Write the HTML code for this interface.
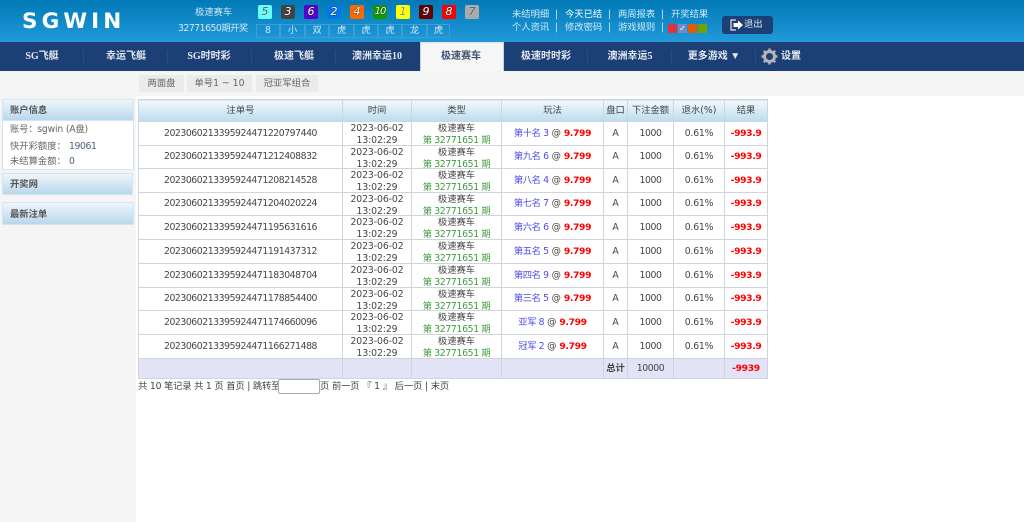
<!DOCTYPE html>
<html lang="zh"><head><meta charset="utf-8"><title>SGWIN</title>
<style>
*{box-sizing:border-box}
html,body{margin:0;padding:0;width:1024px;height:522px;overflow:hidden;background:#fff}
body{font-family:"DejaVu Sans","Noto Sans CJK SC",sans-serif;font-size:9.3px;color:#444}
#w{position:relative;width:1024px;height:522px;overflow:hidden;filter:blur(.3px)}
.a{position:absolute;white-space:nowrap}
.hd{left:0;top:0;width:1024px;height:42px;background:linear-gradient(#0079b6,#229ada)}
.nav{left:0;top:42px;width:1024px;height:29px;background:#1c3f75}
.n{top:42px;height:29px;width:84px;text-align:center;color:#e4e9f0;font:bold 10px/29px "Liberation Serif","Noto Sans CJK SC",sans-serif}
.sep{top:50px;width:1px;height:13px;background:#2a4d80}
.t{color:#d3e9f7;font-size:9.3px;line-height:12px}
.b{top:5px;width:14px;height:14px;border-radius:2px;text-align:center;font:italic 11px/14px "DejaVu Sans",sans-serif;color:#fff;text-shadow:0 0 1px #222,0 0 1px #222}
.c{top:24px;height:14px;border:1px solid #3a9fd6;text-align:center;color:#cfe6f5;line-height:12px;font-size:9.3px}
.sub{top:75px;height:17px;background:#ebebeb;color:#666;text-align:center;line-height:17px;font-size:9.3px}
.side{left:0;top:71px;width:136px;height:451px;background:#f5f5f5}
.sh{background:linear-gradient(#f0f6fb,#b9d7ec);border:1px solid #d4e5f2;color:#555;font-weight:bold;font-size:9.3px;padding-left:7px}
table{position:absolute;left:138px;top:99px;width:629px;border-collapse:collapse;table-layout:fixed;border:1px solid #c9d0dc}
td,th{border:1px solid #cfd4de;text-align:center;padding:0;font-size:9.3px;line-height:12px;font-weight:normal;white-space:nowrap}
th{background:linear-gradient(#f2f8fc,#bcdcf0);color:#444}
tr.h{height:22px}
tr.x24{height:24px}
tr.x23{height:23px}
tr.s{height:20px}
tr.s td{background:#e2e3f6}
.x{height:21px}
.o{letter-spacing:-.45px}
.m{letter-spacing:-.4px}
.d{letter-spacing:-.1px}
.g{color:#3f9a3f;letter-spacing:-.35px}
.u{color:#4b4bf0;letter-spacing:-.4px}
.w{color:#f00;font-weight:bold;font-size:9.2px;letter-spacing:-.35px}
.p{letter-spacing:-.2px}
</style></head><body><div id="w">
<div class="a hd"></div>
<div class="a" style="left:22px;top:9px;color:#fff;font:bold 21.5px/26px 'DejaVu Sans',sans-serif;letter-spacing:4.1px">SGWIN</div>
<div class="a t" style="left:195px;top:7px">极速赛车</div>
<div class="a t" style="left:178px;top:23px;letter-spacing:-.5px">32771650期开奖</div>
<div class="a b" style="left:258px;background:#6ff;color:#555;text-shadow:0 0 1px #fff">5</div>
<div class="a b" style="left:281px;background:#444">3</div>
<div class="a b" style="left:304px;background:#50c">6</div>
<div class="a b" style="left:327px;background:#07e">2</div>
<div class="a b" style="left:350px;background:#f60">4</div>
<div class="a b" style="left:373px;background:#190;font-size:10px;letter-spacing:-1px">10</div>
<div class="a b" style="left:396px;background:#ff0;color:#888;text-shadow:0 0 1px #fff">1</div>
<div class="a b" style="left:419px;background:#600">9</div>
<div class="a b" style="left:442px;background:#f00">8</div>
<div class="a b" style="left:465px;background:#aaa;color:#555;text-shadow:0 0 1px #fff">7</div>
<div class="a c" style="left:256px;width:24px">8</div>
<div class="a c" style="left:280px;width:25px">小</div>
<div class="a c" style="left:305px;width:24px">双</div>
<div class="a c" style="left:329px;width:25px">虎</div>
<div class="a c" style="left:354px;width:24px">虎</div>
<div class="a c" style="left:378px;width:24px">虎</div>
<div class="a c" style="left:402px;width:25px">龙</div>
<div class="a c" style="left:427px;width:23px">虎</div>
<div class="a t" style="left:512px;top:9px">未结明细</div><div class="a t" style="left:555px;top:9px">|</div>
<div class="a t" style="left:565px;top:9px;color:#fff">今天已结</div><div class="a t" style="left:608px;top:9px">|</div>
<div class="a t" style="left:618px;top:9px">两周报表</div><div class="a t" style="left:661px;top:9px">|</div>
<div class="a t" style="left:671px;top:9px">开奖结果</div>
<div class="a t" style="left:512px;top:22px">个人资讯</div><div class="a t" style="left:555px;top:22px">|</div>
<div class="a t" style="left:565px;top:22px">修改密码</div><div class="a t" style="left:608px;top:22px">|</div>
<div class="a t" style="left:618px;top:22px">游戏规则</div><div class="a t" style="left:661px;top:22px">|</div>
<div class="a" style="left:668px;top:24px;width:9px;height:9px;background:#e4313f"></div>
<div class="a" style="left:678px;top:24px;width:9px;height:9px;background:#6f8cc4;color:#fff;font-size:8px;line-height:9px;text-align:center">✓</div>
<div class="a" style="left:688px;top:24px;width:9px;height:9px;background:#e25c00"></div>
<div class="a" style="left:698px;top:24px;width:9px;height:9px;background:#6ea500"></div>
<div class="a" style="left:722px;top:16px;width:51px;height:18px;background:#1c3f75;border-radius:3px"></div>
<svg class="a" style="left:730px;top:19px" width="14" height="12" viewBox="0 0 14 12"><path d="M6 1H1v10h5" fill="none" stroke="#dfe7f2" stroke-width="1.2"/><path d="M3.500 4H8V1.500L13 6 8 10.500V8H3.500z" fill="#fff"/></svg>
<div class="a" style="left:744px;top:19px;color:#dfe7f2;font-size:9.3px;line-height:12px">退出</div>

<div class="a nav"></div>
<div class="a n" style="left:0">SG飞艇</div>
<div class="a sep" style="left:83px"></div>
<div class="a n" style="left:84px">幸运飞艇</div>
<div class="a sep" style="left:167px"></div>
<div class="a n" style="left:167px">SG时时彩</div>
<div class="a sep" style="left:251px"></div>
<div class="a n" style="left:252px">极速飞艇</div>
<div class="a sep" style="left:335px"></div>
<div class="a n" style="left:335px">澳洲幸运10</div>
<div class="a" style="left:420px;top:42px;width:84px;height:30px;background:#f6f6f6;border-top:1px solid #d7e6f2;border-left:1px solid #c7d5e4;border-right:1px solid #c7d5e4"></div>
<div class="a n" style="left:419px;color:#3c4f70">极速赛车</div>
<div class="a n" style="left:504px">极速时时彩</div>
<div class="a sep" style="left:587px"></div>
<div class="a n" style="left:588px">澳洲幸运5</div>
<div class="a sep" style="left:671px"></div>
<div class="a n" style="left:672px">更多游戏 ▼</div>
<div class="a sep" style="left:755px"></div>
<svg class="a" style="left:761px;top:48px" width="17" height="17" viewBox="0 0 17 17"><circle cx="8.500" cy="8.500" r="5" fill="none" stroke="#b5b5b5" stroke-width="3"/><path d="M8.500 0.500v3M8.500 13.500v3M0.500 8.500h3M13.500 8.500h3M2.800 2.800l2.200 2.200M12 12l2.200 2.200M14.200 2.800L12 5M5 12l-2.200 2.200" stroke="#b5b5b5" stroke-width="2.400"/></svg>
<div class="a n" style="left:781px;width:17px;text-align:left">设置</div>

<div class="a side"></div>
<div class="a" style="left:0;top:71px;width:1024px;height:25px;background:#f5f5f5"></div>
<div class="a sub" style="left:139px;width:45px">两面盘</div>
<div class="a sub" style="left:187px;width:65px">单号1 ~ 10</div>
<div class="a sub" style="left:256px;width:62px">冠亚军组合</div>

<div class="a" style="left:2px;top:99px;width:132px;height:71px;background:#fff;border:1px solid #d4e5f2"></div>
<div class="a sh" style="left:2px;top:99px;width:132px;height:22px;line-height:22px">账户信息</div>
<div class="a" style="left:10px;top:124px;line-height:12px;color:#666;letter-spacing:-.2px">账号：sgwin (A盘)</div>
<div class="a" style="left:10px;top:141px;line-height:12px;color:#666">快开彩额度：<span style="position:absolute;left:59px;color:#4a6080;letter-spacing:-.4px">19061</span></div>
<div class="a" style="left:10px;top:156px;line-height:12px;color:#666">未结算金额：<span style="position:absolute;left:59px;color:#4a6080">0</span></div>
<div class="a sh" style="left:2px;top:173px;width:131px;height:22px;line-height:22px">开奖网</div>
<div class="a sh" style="left:2px;top:202px;width:132px;height:23px;line-height:23px">最新注单</div>

<table>
<colgroup><col style="width:204px"><col style="width:69px"><col style="width:90px"><col style="width:102px"><col style="width:24px"><col style="width:46px"><col style="width:51px"><col style="width:43px"></colgroup>
<tr class="h"><th>注单号</th><th>时间</th><th>类型</th><th>玩法</th><th>盘口</th><th>下注金额</th><th>退水(%)</th><th>结果</th></tr>
<tr class="x24"><td class="o">2023060213395924471220797440</td><td class="d"><div class="x">2023-06-02<br>13:02:29</div></td><td><div class="x">极速赛车<br><span class="g">第 32771651 期</span></div></td><td><span class="u">第十名 3</span> @ <span class="w">9.799</span></td><td>A</td><td class="m">1000</td><td class="p">0.61%</td><td class="w">-993.9</td></tr>
<tr class="x23"><td class="o">2023060213395924471212408832</td><td class="d"><div class="x">2023-06-02<br>13:02:29</div></td><td><div class="x">极速赛车<br><span class="g">第 32771651 期</span></div></td><td><span class="u">第九名 6</span> @ <span class="w">9.799</span></td><td>A</td><td class="m">1000</td><td class="p">0.61%</td><td class="w">-993.9</td></tr>
<tr class="x24"><td class="o">2023060213395924471208214528</td><td class="d"><div class="x">2023-06-02<br>13:02:29</div></td><td><div class="x">极速赛车<br><span class="g">第 32771651 期</span></div></td><td><span class="u">第八名 4</span> @ <span class="w">9.799</span></td><td>A</td><td class="m">1000</td><td class="p">0.61%</td><td class="w">-993.9</td></tr>
<tr class="x23"><td class="o">2023060213395924471204020224</td><td class="d"><div class="x">2023-06-02<br>13:02:29</div></td><td><div class="x">极速赛车<br><span class="g">第 32771651 期</span></div></td><td><span class="u">第七名 7</span> @ <span class="w">9.799</span></td><td>A</td><td class="m">1000</td><td class="p">0.61%</td><td class="w">-993.9</td></tr>
<tr class="x24"><td class="o">2023060213395924471195631616</td><td class="d"><div class="x">2023-06-02<br>13:02:29</div></td><td><div class="x">极速赛车<br><span class="g">第 32771651 期</span></div></td><td><span class="u">第六名 6</span> @ <span class="w">9.799</span></td><td>A</td><td class="m">1000</td><td class="p">0.61%</td><td class="w">-993.9</td></tr>
<tr class="x24"><td class="o">2023060213395924471191437312</td><td class="d"><div class="x">2023-06-02<br>13:02:29</div></td><td><div class="x">极速赛车<br><span class="g">第 32771651 期</span></div></td><td><span class="u">第五名 5</span> @ <span class="w">9.799</span></td><td>A</td><td class="m">1000</td><td class="p">0.61%</td><td class="w">-993.9</td></tr>
<tr class="x24"><td class="o">2023060213395924471183048704</td><td class="d"><div class="x">2023-06-02<br>13:02:29</div></td><td><div class="x">极速赛车<br><span class="g">第 32771651 期</span></div></td><td><span class="u">第四名 9</span> @ <span class="w">9.799</span></td><td>A</td><td class="m">1000</td><td class="p">0.61%</td><td class="w">-993.9</td></tr>
<tr class="x23"><td class="o">2023060213395924471178854400</td><td class="d"><div class="x">2023-06-02<br>13:02:29</div></td><td><div class="x">极速赛车<br><span class="g">第 32771651 期</span></div></td><td><span class="u">第三名 5</span> @ <span class="w">9.799</span></td><td>A</td><td class="m">1000</td><td class="p">0.61%</td><td class="w">-993.9</td></tr>
<tr class="x24"><td class="o">2023060213395924471174660096</td><td class="d"><div class="x">2023-06-02<br>13:02:29</div></td><td><div class="x">极速赛车<br><span class="g">第 32771651 期</span></div></td><td><span class="u">亚军 8</span> @ <span class="w">9.799</span></td><td>A</td><td class="m">1000</td><td class="p">0.61%</td><td class="w">-993.9</td></tr>
<tr class="x24"><td class="o">2023060213395924471166271488</td><td class="d"><div class="x">2023-06-02<br>13:02:29</div></td><td><div class="x">极速赛车<br><span class="g">第 32771651 期</span></div></td><td><span class="u">冠军 2</span> @ <span class="w">9.799</span></td><td>A</td><td class="m">1000</td><td class="p">0.61%</td><td class="w">-993.9</td></tr>
<tr class="s"><td></td><td></td><td></td><td></td><td style="font-weight:bold">总计</td><td class="m">10000</td><td></td><td class="w">-9939</td></tr>
</table>
<div class="a" style="left:138px;top:381px;line-height:12px;color:#444;letter-spacing:-.2px">共 10 笔记录 共 1 页 首页 | 跳转至</div>
<div class="a" style="left:278px;top:379px;width:42px;height:15px;background:#fff;border:1px solid #aaa;border-radius:2px"></div>
<div class="a" style="left:320px;top:381px;line-height:12px;color:#444;letter-spacing:-.15px">页 前一页 『 1 』 后一页 | 末页</div>
</div></body></html>
